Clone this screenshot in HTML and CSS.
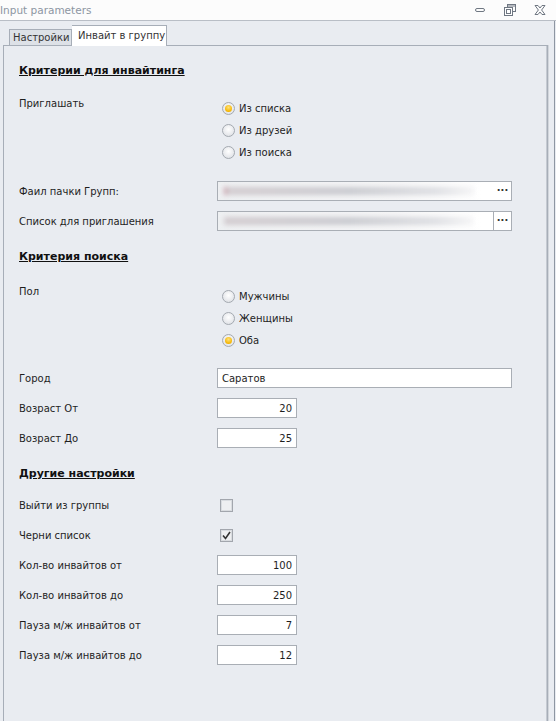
FILE: index.html
```html
<!DOCTYPE html>
<html>
<head>
<meta charset="utf-8">
<link rel="stylesheet" href="styles.css">
</head>
<body>
<div class="window">
  <div class="titlebar">
    <span class="title">Input parameters</span>
    <div class="controls">
      <svg class="ctl" width="12" height="12" viewBox="0 0 12 12"><rect x="1.5" y="4.5" width="9" height="3" rx="1.5" fill="none" stroke="#6f7782"/></svg>
      <svg class="ctl" width="12" height="12" viewBox="0 0 12 12"><rect x="3.5" y="0.5" width="8" height="7" fill="none" stroke="#6f7782"/><rect x="0.5" y="3.5" width="8" height="8" fill="#fff" stroke="#6f7782"/><rect x="2.5" y="5.5" width="4" height="4" fill="none" stroke="#6f7782"/><line x1="4" y1="2" x2="11" y2="2" stroke="#6f7782"/></svg>
      <svg class="ctl" width="12" height="12" viewBox="0 0 12 12"><path d="M1 1.5 L4 1.5 L6 4 L8 1.5 L11 1.5 L7.6 6 L11 10.5 L8 10.5 L6 8 L4 10.5 L1 10.5 L4.4 6 Z" fill="none" stroke="#6f7782" stroke-linejoin="round"/></svg>
    </div>
  </div>
  <div class="frame">
    <div class="tabs">
      <div class="tab">Настройки</div>
      <div class="tab active">Инвайт в группу</div>
    </div>
    <div class="panel">
      <div class="heading h1">Критерии для инвайтинга</div>

      <div class="row row-radio invite">
        <div class="label">Приглашать</div>
        <div class="radios">
          <div class="radio-item"><span class="radio on"></span>Из списка</div>
          <div class="radio-item"><span class="radio"></span>Из друзей</div>
          <div class="radio-item"><span class="radio"></span>Из поиска</div>
        </div>
      </div>

      <div class="row file-row">
        <div class="label">Фаил пачки Групп:</div>
        <div class="input wide file"><span class="blur b1"></span><span class="dots">...</span></div>
      </div>
      <div class="row">
        <div class="label">Список для приглашения</div>
        <div class="input wide file"><span class="blur b2"></span><span class="dots sep">...</span></div>
      </div>

      <div class="heading h2">Критерия поиска</div>

      <div class="row row-radio sex">
        <div class="label">Пол</div>
        <div class="radios">
          <div class="radio-item"><span class="radio"></span>Мужчины</div>
          <div class="radio-item"><span class="radio"></span>Женщины</div>
          <div class="radio-item"><span class="radio on"></span>Оба</div>
        </div>
      </div>

      <div class="row city">
        <div class="label">Город</div>
        <div class="input wide">Саратов</div>
      </div>
      <div class="row">
        <div class="label">Возраст От</div>
        <div class="input num">20</div>
      </div>
      <div class="row">
        <div class="label">Возраст До</div>
        <div class="input num">25</div>
      </div>

      <div class="heading h3">Другие настройки</div>

      <div class="row first-check">
        <div class="label">Выйти из группы</div>
        <div><span class="check"></span></div>
      </div>
      <div class="row">
        <div class="label">Черни список</div>
        <div><span class="check"><svg width="9" height="9" viewBox="0 0 9 9"><path d="M1 4.5 L3.5 7.5 L8 1" fill="none" stroke="#333" stroke-width="1.6"/></svg></span></div>
      </div>
      <div class="row">
        <div class="label">Кол-во инвайтов от</div>
        <div class="input num">100</div>
      </div>
      <div class="row">
        <div class="label">Кол-во инвайтов до</div>
        <div class="input num">250</div>
      </div>
      <div class="row">
        <div class="label">Пауза м/ж инвайтов от</div>
        <div class="input num">7</div>
      </div>
      <div class="row">
        <div class="label">Пауза м/ж инвайтов до</div>
        <div class="input num">12</div>
      </div>
    </div>
  </div>
</div>
</body>
</html>
```

FILE: styles.css
```css
html, body {
  margin: 0;
  padding: 0;
  height: 100%;
  overflow: hidden;
}
body {
  background: #e9ecf1;
  font-family: "DejaVu Sans", "Liberation Sans", sans-serif;
  font-size: 10px;
  color: #1e1e1e;
}
.window {
  height: 721px;
  display: flex;
  flex-direction: column;
}
.titlebar {
  height: 20px;
  background: #fcfcfc;
  display: flex;
  align-items: center;
  justify-content: space-between;
  border-bottom: 1px solid #b9bec6;
}
.title {
  margin-left: 0;
  color: #8d96a2;
  font-size: 10.5px;
}
.controls {
  display: flex;
  gap: 18px;
  margin-right: 10px;
  align-items: center;
}
.frame {
  flex: 1;
  border-right: 1px solid #8e96a2;
  margin-right: 1px;
  padding: 4px 6px 0 3px;
  display: flex;
  flex-direction: column;
}
.tabs {
  display: flex;
  align-items: flex-end;
  padding-left: 6px;
  height: 20px;
}
.tab {
  box-sizing: border-box;
  height: 16px;
  line-height: 15px;
  padding: 0 0 0 3px;
  background: #dde1e7;
  border: 1px solid #a7aeb8;
  border-bottom: none;
  color: #333;
  width: 63px;
  white-space: nowrap;
}
.tab.active {
  height: 21px;
  line-height: 19px;
  background: #ffffff;
  border-left: none;
  width: 95px;
  padding: 0 0 0 6px;
  position: relative;
  top: 1px;
}
.panel {
  flex: 1;
  border: 1px solid #a7aeb8;
  border-bottom: none;
  box-shadow: inset -1px 0 0 #c5cad2, 1px 0 0 #d2d6dc;
  padding: 0 0 0 15px;
  display: flex;
  flex-direction: column;
}
.heading {
  height: 22px;
  line-height: 22px;
  font-weight: bold;
  font-size: 11px;
  text-decoration: underline;
  color: #111;
}
.h1 { margin-top: 14px; }
.h2 { margin-top: 10px; }
.h3 { margin-top: 10px; }
.row {
  display: grid;
  grid-template-columns: 198px 1fr;
  height: 30px;
  align-items: center;
}
.row-radio {
  height: auto;
  align-items: start;
}
.row-radio .label { line-height: 22px; }
.invite { margin-top: 11px; }
.sex { margin-top: 13px; }
.radios {
  margin-top: 4px;
  display: flex;
  flex-direction: column;
}
.radio-item {
  height: 22px;
  display: flex;
  align-items: center;
  padding-left: 5px;
}
.radio {
  width: 11px;
  height: 11px;
  border-radius: 50%;
  border: 1px solid #a4a9b0;
  background: radial-gradient(circle at 50% 40%, #ffffff 0%, #e4e6ea 70%, #d2d5da 100%);
  margin-right: 4px;
  box-sizing: content-box;
  position: relative;
}
.radio.on::after {
  content: "";
  position: absolute;
  left: 2px;
  top: 2px;
  width: 7px;
  height: 7px;
  border-radius: 50%;
  background: radial-gradient(circle at 50% 35%, #ffe27a 0%, #f4b400 70%, #dc9a00 100%);
}
.file-row { margin-top: 13px; }
.city { margin-top: 12px; }
.first-check { margin-top: 5px; }
.input {
  box-sizing: border-box;
  height: 20px;
  border: 1px solid #a9aeb5;
  background: #fff;
  display: flex;
  align-items: center;
  padding: 0 4px;
  color: #1e1e1e;
}
.wide { width: 295px; }
.num {
  width: 80px;
  justify-content: flex-end;
  padding-right: 4px;
}
.file {
  padding: 0;
  position: relative;
  background: linear-gradient(to right, #eef0f2 0%, #f6f6f7 60%, #ffffff 90%);
  overflow: hidden;
}
.blur {
  flex: 1;
  height: 8px;
  margin: 0 20px 0 6px;
  background: linear-gradient(to right, #d3ccd0, #cacbd0 50%, #dedfe3 85%, #f5f5f6);
  filter: blur(2.5px);
}
.b1 { border-left: 3px solid #c9a3ad; }
.dots {
  width: 17px;
  height: 18px;
  line-height: 12px;
  text-align: center;
  font-weight: bold;
  color: #333;
  background: #fff;
  font-size: 10px;
}
.dots.sep { border-left: 1px solid #a9aeb5; }
.check {
  width: 11px;
  height: 11px;
  margin-left: 3px;
  border: 1px solid #a2a6ad;
  background: #eeeff1;
  box-shadow: inset 0 0 0 1px #d9dce0;
  display: flex;
  align-items: center;
  justify-content: center;
}
```
